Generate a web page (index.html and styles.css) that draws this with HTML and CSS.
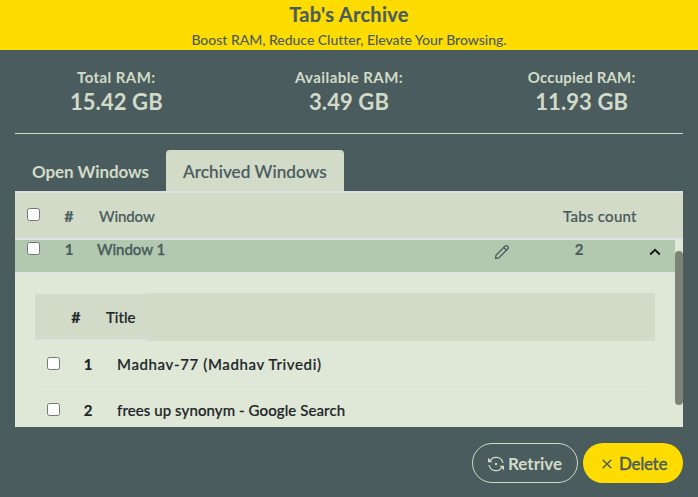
FILE: index.html
```html
<!DOCTYPE html>
<html lang="en">
<head>
<meta charset="utf-8">
<title>Tab's Archive</title>
<link rel="stylesheet" href="styles.css">
</head>
<body>
<header class="banner">
  <h1>Tab's Archive</h1>
  <p>Boost RAM, Reduce Clutter, Elevate Your Browsing.</p>
</header>
<section class="stats">
  <div class="stat"><span class="label">Total RAM:</span><strong>15.42 GB</strong></div>
  <div class="stat"><span class="label">Available RAM:</span><strong>3.49 GB</strong></div>
  <div class="stat"><span class="label label-occupied">Occupied RAM:</span><strong>11.93 GB</strong></div>
</section>
<main class="content">
  <nav class="tabs">
    <div class="tab tab-open">Open Windows</div>
    <div class="tab tab-active">Archived Windows</div>
  </nav>
  <div class="row head">
    <input type="checkbox"><span class="num hash">#</span><span class="name">Window</span><span class="count">Tabs count</span>
  </div>
  <div class="panel">
    <div class="list">
      <div class="row window">
        <input type="checkbox"><span class="num">1</span><span class="name">Window 1</span>
        <svg class="pencil" viewBox="0 0 16 16"><path d="M1.6 14.4 2 11.2 10.9 2.2Q12.3 1 13.6 2.2 14.9 3.6 13.7 5L4.8 13.9ZM9.8 3.5l2.8 2.8"/></svg>
        <span class="qty">2</span>
        <svg class="chevron" viewBox="0 0 12 8"><path d="m1.2 6.5 4.8-4.7 4.8 4.7"/></svg>
      </div>
      <div class="subtable">
        <div class="subhead"><div class="subhead-cells"><span class="subhash">#</span><span>Title</span></div></div>
        <div class="subrow"><input type="checkbox"><span class="num">1</span><span class="page page-wide">Madhav-77 (Madhav Trivedi)</span></div>
        <div class="subrow"><input type="checkbox"><span class="num">2</span><span class="page">frees up synonym - Google Search</span></div>
      </div>
    </div>
    <div class="scrollbar"><div class="thumb"></div></div>
  </div>
  <footer class="actions">
    <button class="btn retrieve"><svg class="sync" viewBox="0 0 16 16"><path d="M2 5A6.9 6.9 0 0 1 14.9 7M14 11A6.9 6.9 0 0 1 1.1 9"/><path class="solid" d="M0 1.8V6.2H4.4ZM16 14.2V9.8H11.6Z"/><circle class="solid" cx="8" cy="8" r="1.2"/></svg>Retrive</button>
    <button class="btn delete"><svg class="cross" viewBox="0 0 10 10"><path d="m.7.7 8.6 8.6M9.3.7.7 9.3"/></svg>Delete</button>
  </footer>
</main>
</body>
</html>
```
FILE: styles.css
```css
* { box-sizing: border-box; }
body {
  margin: 0;
  height: 497px;
  overflow: hidden;
  background: #4a5c5e;
  color: #4a5c5e;
  font: 500 15px/20px Lato, "Liberation Sans", sans-serif;
  -webkit-text-stroke: .2px currentColor;
  white-space: nowrap;
}
.banner { height: 50px; background: #ffdc00; text-align: center; }
h1 { margin: 0; font-size: 20px; line-height: 28px; font-weight: 700; letter-spacing: .3px; }
.banner p { margin: 0; padding-top: 2px; font-size: 14px; line-height: 20px; letter-spacing: -.02px; -webkit-text-stroke: 0; }
.stats { display: grid; grid-template-columns: repeat(3, 1fr); height: 83px; padding-top: 16px; text-align: center; color: #d2dbc8; }
.stat { display: flex; flex-direction: column; align-items: center; }
.label { font-weight: 700; line-height: 22px; letter-spacing: .42px; -webkit-text-stroke: 0; }
.label-occupied { letter-spacing: .17px; }
.stat strong { font-size: 22px; line-height: 28px; letter-spacing: .1px; -webkit-text-stroke: 0; }
.content { margin: 0 15px; border-top: 1px solid #d2dbc8; }
.tabs { display: flex; height: 57px; padding-top: 16px; font-size: 17.2px; }
.tab { line-height: 44px; height: 41px; padding-left: 17px; }
.tab-open { width: 151px; color: #d2dbc8; font-size: 17px; font-weight: 700; letter-spacing: -.08px; -webkit-text-stroke: 0; }
.tab-active { width: 178px; background: #d2dbc8; border-radius: 4px 4px 0 0; letter-spacing: .04px; }
input { appearance: none; flex: none; width: 13px; height: 13px; margin: 0; border: 1px solid #767676; border-radius: 2.5px; background: #fff; }
.row { display: flex; }
.head { height: 49px; border-top: 2px solid #dee2e6; border-bottom: 2px solid #dee2e6; background: #d2dbc8; align-items: center; padding: 0 0 0 12px; }
.head input { margin-bottom: 2px; }
.num { width: 12px; margin-left: 23px; text-align: center; font-weight: 700; }
.hash, .subhash { font-size: 16px; }
.head .name { margin-left: 24px; width: 464px; letter-spacing: -.1px; }
.count { letter-spacing: .27px; }
.panel { display: flex; height: 187px; background: #dfe8d6; overflow: hidden; }
.list { width: 660px; }
.window { height: 33px; background: #b2c9b0; border-bottom: 1px solid #dee2e6; padding-left: 12px; }
.window input { margin-top: 2px; }
.window .num, .window .name, .qty { margin-top: -1px; }
.window .name { margin-left: 22px; width: 397px; font-weight: 500; letter-spacing: -.05px; -webkit-text-stroke: .35px currentColor; }
.pencil { width: 16px; height: 16px; margin-top: 4px; fill: none; stroke: #4a5c5e; stroke-width: 1.3; }
.qty { width: 12px; margin-left: 63px; font-weight: 700; text-align: center; }
.chevron { width: 12px; height: 8px; margin: 8px 0 0 64px; fill: none; stroke: #111; stroke-width: 1.8; }
.scrollbar { width: 8px; padding-top: 11px; }
.thumb { height: 154px; border-radius: 4px; background: #7c8376; }
.subtable { margin: 20px 20px 0; color: #212529; }
.subhead { height: 48px; background: #d2dbc8; }
.subhead-cells { display: flex; width: 113px; height: 48px; border-top: 1px solid #dee2e6; border-bottom: 2px solid #dee2e6; padding: 13px 0 0 35px; }
.subhash { width: 12px; margin-right: 24px; text-align: center; font-weight: 700; }
.subrow { display: flex; align-items: center; height: 46px; padding: 1px 0 0 12px; border-bottom: 1px solid #dee2e6; }
.subrow input { margin-bottom: 2px; }
.subrow .num { margin-left: 22px; margin-right: 23px; }
.page { letter-spacing: .09px; }
.page-wide { letter-spacing: .63px; }
.actions { display: flex; justify-content: flex-end; gap: 5px; padding-top: 16px; }
.btn { display: flex; align-items: center; height: 40px; border-radius: 20px; padding: 2px 0 0; font: 700 17px/24px Lato, "Liberation Sans", sans-serif; -webkit-text-stroke: 0; }
.retrieve { width: 106px; border: 1px solid #d2dbc8; background: transparent; color: #d2dbc8; padding-left: 15px; }
.delete { width: 100px; border: 0; background: #ffdc00; color: #4a5c5e; padding-left: 19px; font-weight: 500; letter-spacing: -.3px; -webkit-text-stroke: .3px currentColor; }
.sync { width: 16px; height: 16px; margin-right: 4px; fill: none; stroke: #d2dbc8; stroke-width: 1.3; }
.sync .solid { fill: #d2dbc8; stroke: none; }
.cross { width: 10px; height: 10px; margin-right: 7px; fill: none; stroke: #4a5c5e; stroke-width: 1.4; }
```
